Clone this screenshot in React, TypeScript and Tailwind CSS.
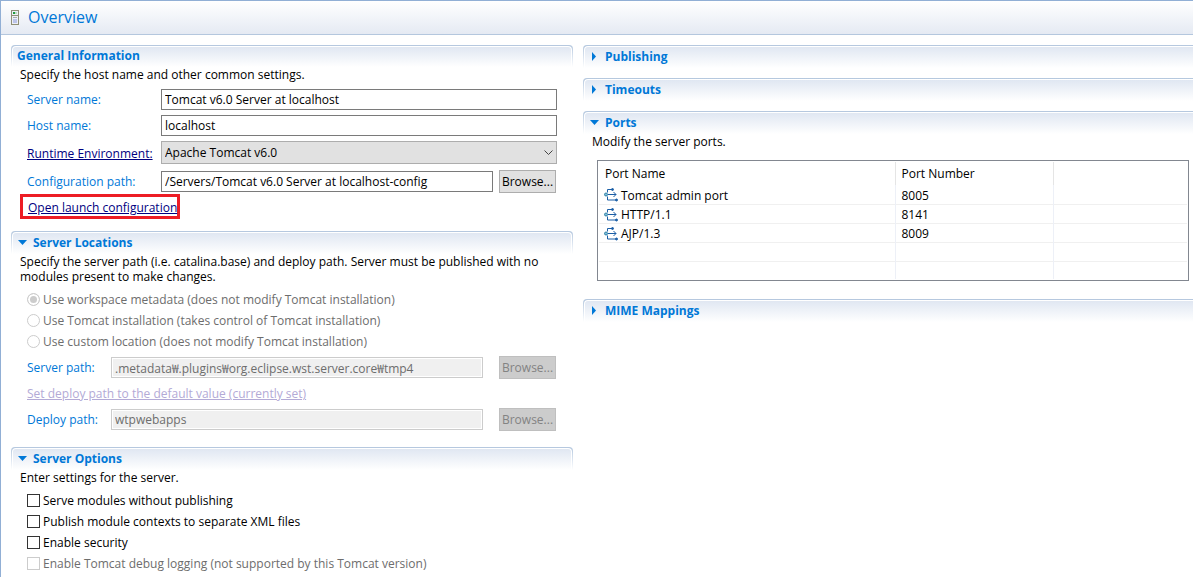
import type { ReactNode } from 'react';

const fieldClass = 'h-[21px] min-w-0 border border-[#7a7a7a] bg-white px-[3px] text-black outline-none';
const disabledFieldClass = 'h-[21px] min-w-0 border border-[#cccccc] bg-[#f0f0f0] px-[3px] text-[#6d6d6d] shadow-[inset_0_0_0_1px_white] outline-none';

const radios = [
    'Use workspace metadata (does not modify Tomcat installation)',
    'Use Tomcat installation (takes control of Tomcat installation)',
    'Use custom location (does not modify Tomcat installation)',
];

const options = [
    { label: 'Serve modules without publishing', disabled: false },
    { label: 'Publish module contexts to separate XML files', disabled: false },
    { label: 'Enable security', disabled: false },
    { label: 'Enable Tomcat debug logging (not supported by this Tomcat version)', disabled: true },
];

const ports = [
    { name: 'Tomcat admin port', number: '8005' },
    { name: 'HTTP/1.1', number: '8141' },
    { name: 'AJP/1.3', number: '8009' },
];

function ServerIcon() {
    return (
        <svg width="8" height="15" viewBox="0 0 8 15" shapeRendering="crispEdges">
            <rect width="8" height="15" fill="#8f8f76" />
            <rect x="1" y="1" width="6" height="13" fill="#eef0f6" />
            <rect x="2" y="2" width="2" height="2" fill="#1f9a3c" />
            <rect x="4" y="2" width="2" height="2" fill="#b9dcc0" />
            <rect x="1" y="5" width="6" height="1" fill="#8f8f76" />
            <rect x="2" y="7" width="4" height="1" fill="#a9abb0" />
            <rect x="2" y="9" width="4" height="4" fill="#bcc4ea" />
        </svg>
    );
}

function PortIcon() {
    return (
        <svg width="14" height="14" viewBox="0 0 14 14" fill="none" stroke="#1b5ea6" className="shrink-0">
            <path d="M3.500 4.500V1.500H8M3.500 8.500v3.500H12M4 6.500h8M9.500 4l2.500 2.500L9.500 9" />
            <circle cx="2" cy="6.500" r="1.500" fill="#7fc0d8" stroke="#2f7fa6" />
            <circle cx="8.500" cy="1.500" r="1" fill="#1b5ea6" />
            <circle cx="12.500" cy="12" r="1" fill="#1b5ea6" />
        </svg>
    );
}

function Twistie({ open }: { open: boolean }) {
    return (
        <svg width="9" height="9" viewBox="0 0 9 9" fill="#0078d7">
            {open ? <path d="M0 2h9L4.500 7z" /> : <path d="M2 0v9l4-4.500z" />}
        </svg>
    );
}

type SectionProps = {
    title: string;
    open?: boolean;
    bleed?: boolean;
    children?: ReactNode;
};

// Form section with the gradient title bar, bleed lets the bar run off the right edge
function Section({ title, open, bleed, children }: SectionProps) {
    const collapsible = open !== undefined;

    return (
        <section>
            <div className={`bg-gradient-to-b from-[#b4c7de] to-white pt-px pl-px ${bleed ? 'rounded-tl' : 'rounded-t pr-px'}`}>
                <h2
                    className={`flex items-center gap-[6px] border-t border-l border-white bg-gradient-to-b from-[#e0e7f2] to-white pb-[3px] text-[12px] font-bold text-[#0078d7] ${
                        collapsible ? 'h-[22px] pl-[5px]' : 'h-[21px] pl-1'
                    } ${bleed ? 'rounded-tl' : 'rounded-t border-r'}`}
                >
                    {collapsible && <Twistie open={open} />}
                    {title}
                </h2>
            </div>
            {children}
        </section>
    );
}

function Browse({ disabled }: { disabled?: boolean }) {
    return (
        <button
            disabled={disabled}
            className={`h-[23px] w-[57px] shrink-0 border text-center ${
                disabled ? 'border-[#bfbfbf] bg-[#cccccc] text-[#838383]' : 'border-[#adadad] bg-[#e1e1e1] text-black'
            }`}
        >
            Browse...
        </button>
    );
}

export default function App() {
    return (
        <main className="min-h-screen overflow-hidden border-t border-l border-[#91afd5] bg-white font-['Open_Sans','Noto_Sans_CJK_KR',sans-serif] text-[12px] leading-[15px] text-black">
            <header className="flex h-[34px] items-center gap-[9px] border-b border-[#b4c7de] bg-gradient-to-b from-white to-[#e5eaf3] pl-[10px]">
                <ServerIcon />
                <h1 className="pb-px text-[16px] leading-5 text-[#0078d7]">Overview</h1>
            </header>

            <div className="grid grid-cols-[562fr_610fr] gap-[10px] pt-[10px] pl-[10px]">
                <div className="min-w-0">
                    <Section title="General Information">
                        <p className="pl-[9px]">Specify the host name and other common settings.</p>
                        <div className="grid grid-cols-[134px_1fr] items-center gap-y-[5px] pt-[7px] pr-4 pl-4">
                            <label htmlFor="name" className="text-[#0078d7]">Server name:</label>
                            <input id="name" defaultValue="Tomcat v6.0 Server at localhost" className={fieldClass} />
                            <label htmlFor="host" className="text-[#0078d7]">Host name:</label>
                            <input id="host" defaultValue="localhost" className={fieldClass} />
                            <a href="#runtime" className="text-[#000080] underline">Runtime Environment:</a>
                            <div className="relative h-6">
                                <select aria-label="Runtime Environment" className="block h-[23px] w-full appearance-none border border-[#adadad] bg-[#e1e1e1] px-[3px] outline-none">
                                    <option>Apache Tomcat v6.0</option>
                                </select>
                                <svg width="9" height="6" viewBox="0 0 9 6" fill="none" stroke="#444" className="pointer-events-none absolute top-[9px] right-1">
                                    <path d="M.5 .5l4 4 4-4" />
                                </svg>
                            </div>
                            <label htmlFor="config" className="text-[#0078d7]">Configuration path:</label>
                            <div className="flex items-center gap-[6px] pr-px">
                                <input id="config" defaultValue="/Servers/Tomcat v6.0 Server at localhost-config" className={`${fieldClass} flex-1`} />
                                <Browse />
                            </div>
                        </div>
                        <div className="pt-px pl-[9px]">
                            <a href="#launch" className="inline-block h-[25px] border-3 border-[#ed1c24] pl-[5px] leading-[21px] text-[#000080] underline">
                                Open launch configuration
                            </a>
                        </div>
                    </Section>

                    <div className="pt-3">
                        <Section title="Server Locations" open>
                            <p className="pr-8 pl-[9px]">
                                Specify the server path (i.e. catalina.base) and deploy path. Server must be published with no modules present to make changes.
                            </p>
                            <div className="flex flex-col pt-[5px] pl-4 text-[#6d6d6d]">
                                {radios.map((text, i) => (
                                    <label key={text} className="flex h-[21px] items-center gap-[3px]">
                                        <input
                                            type="radio"
                                            name="location"
                                            disabled
                                            defaultChecked={i === 0}
                                            className="size-[13px] appearance-none rounded-full border border-[#cccccc] bg-white checked:bg-[#cccccc] checked:shadow-[inset_0_0_0_2px_white]"
                                        />
                                        {text}
                                    </label>
                                ))}
                            </div>
                            <div className="flex flex-col gap-[3px] pt-[4px] pr-[17px] pl-4">
                                <div className="flex items-center">
                                    <label htmlFor="spath" className="w-[84px] text-[#0078d7]">Server path:</label>
                                    <input id="spath" disabled defaultValue=".metadata₩.plugins₩org.eclipse.wst.server.core₩tmp4" className={`${disabledFieldClass} mr-4 flex-1`} />
                                    <Browse disabled />
                                </div>
                                <a href="#default" className="h-[23px] leading-[23px] text-[#b3aad6] underline">Set deploy path to the default value (currently set)</a>
                                <div className="flex items-center">
                                    <label htmlFor="dpath" className="w-[84px] text-[#0078d7]">Deploy path:</label>
                                    <input id="dpath" disabled defaultValue="wtpwebapps" className={`${disabledFieldClass} mr-4 flex-1`} />
                                    <Browse disabled />
                                </div>
                            </div>
                        </Section>
                    </div>

                    <div className="pt-4">
                        <Section title="Server Options" open>
                            <p className="pl-[9px]">Enter settings for the server.</p>
                            <div className="flex flex-col pt-[5px] pl-4">
                                {options.map((option) => (
                                    <label key={option.label} className={`flex h-[21px] items-center gap-[3px] ${option.disabled ? 'text-[#6d6d6d]' : ''}`}>
                                        <input
                                            type="checkbox"
                                            disabled={option.disabled}
                                            className="size-[13px] appearance-none border border-[#333333] bg-white checked:bg-[#333333] disabled:border-[#cccccc]"
                                        />
                                        {option.label}
                                    </label>
                                ))}
                            </div>
                        </Section>
                    </div>
                </div>

                <div className="flex min-w-0 flex-col gap-[10px]">
                    <Section title="Publishing" open={false} bleed />
                    <Section title="Timeouts" open={false} bleed />
                    <Section title="Ports" open bleed>
                        <p className="pl-[9px]">Modify the server ports.</p>
                        <div className="pt-[11px] pr-1 pb-2 pl-[14px]">
                            <div className="border border-[#828790] p-px">
                                <table className="w-full table-fixed border-collapse text-left">
                                    <thead>
                                        <tr className="h-[23px]">
                                            <th className="w-[296px] border-r border-[#e5e5e5] pl-[6px] font-normal">Port Name</th>
                                            <th className="w-[158px] border-r border-[#e5e5e5] pl-[6px] font-normal">Port Number</th>
                                            <th></th>
                                        </tr>
                                    </thead>
                                    <tbody>
                                        {ports.map((port) => (
                                            <tr key={port.name} className="h-[19px] border-b border-[#f0f0f0]">
                                                <td className="border-r border-[#edf0f7] pt-[2px] pl-[5px]">
                                                    <span className="flex items-center gap-[3px]">
                                                        <PortIcon />
                                                        {port.name}
                                                    </span>
                                                </td>
                                                <td className="border-r border-[#edf0f7] pt-[2px] pl-[6px]">{port.number}</td>
                                                <td></td>
                                            </tr>
                                        ))}
                                        <tr className="h-[19px] border-b border-[#f0f0f0]">
                                            <td className="border-r border-[#edf0f7]"></td>
                                            <td className="border-r border-[#edf0f7]"></td>
                                            <td></td>
                                        </tr>
                                        <tr className="h-[18px]">
                                            <td className="border-r border-[#edf0f7]"></td>
                                            <td className="border-r border-[#edf0f7]"></td>
                                            <td></td>
                                        </tr>
                                    </tbody>
                                </table>
                            </div>
                        </div>
                    </Section>
                    <Section title="MIME Mappings" open={false} bleed />
                </div>
            </div>
        </main>
    );
}
